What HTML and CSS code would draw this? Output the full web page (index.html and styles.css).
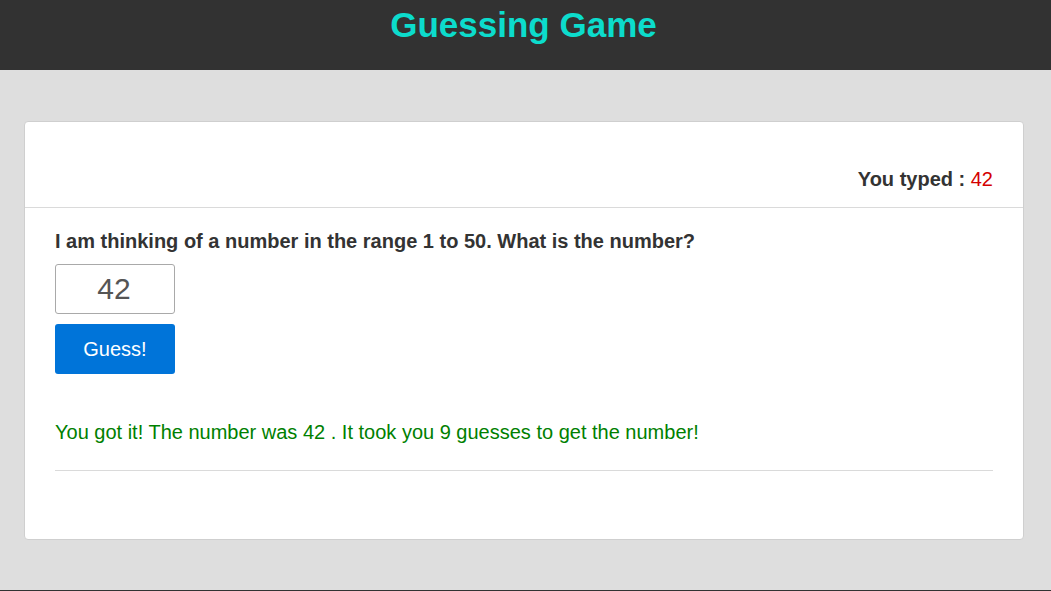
FILE: index.html
```html
<!DOCTYPE html>
<html>
<head>
<meta charset="utf-8">
<link rel="stylesheet" href="styles.css">
</head>
<body>
<header class="top">
  <h1 class="title">Guessing Game</h1>
</header>
<main class="card">
  <div class="card-head">
    <span class="typed-label">You typed : </span><span class="typed-val">42</span>
  </div>
  <div class="card-body">
    <h2 class="question">I am thinking of a number in the range 1 to 50. What is the number?</h2>
    <input class="guess-input" type="text" value="42" autofocus>
    <button class="guess-btn">Guess!</button>
    <p class="result">You got it! The number was 42 . It took you 9 guesses to get the number!</p>
    <hr class="rule">
  </div>
</main>
<footer class="foot"></footer>
</body>
</html>
```
FILE: styles.css
```css
html, body {
  margin: 0;
  padding: 0;
}
body {
  background: #dedede;
  font-family: "Liberation Sans", Arial, sans-serif;
  color: #333;
}
.top {
  background: #323232;
  height: 70px;
  display: flex;
  justify-content: center;
}
.title {
  margin: 5px 0 0 -4px;
  font-size: 35px;
  line-height: 40px;
  color: #0cdccc;
  font-weight: bold;
}
.card {
  width: 998px;
  margin: 51px 0 0 24px;
  background: #fff;
  border: 1px solid #cfcfcf;
  border-radius: 4px;
}
.card-head {
  height: 86px;
  border-bottom: 1px solid #dadada;
  display: flex;
  justify-content: flex-end;
  align-items: flex-end;
  padding: 0 30px 16px;
  box-sizing: border-box;
  font-size: 20px;
  line-height: 23px;
}
.typed-label {
  font-weight: bold;
  white-space: pre;
}
.typed-val {
  color: #d40000;
}
.card-body {
  padding: 22px 30px 68px;
  display: flex;
  flex-direction: column;
  align-items: flex-start;
}
.question {
  margin: 0 0 11px;
  font-size: 20px;
  line-height: 23px;
  font-weight: bold;
}
.guess-input {
  width: 120px;
  height: 50px;
  box-sizing: border-box;
  border: 1px solid #a9a9a9;
  border-radius: 3px;
  font-family: "Liberation Sans", Arial, sans-serif;
  font-size: 30px;
  color: #555;
  text-align: center;
  padding: 0 2px 0 0;
  outline: none;
}
.guess-btn {
  margin-top: 10px;
  width: 120px;
  height: 50px;
  border: none;
  border-radius: 3px;
  background: #0074d9;
  color: #fff;
  font-family: "Liberation Sans", Arial, sans-serif;
  font-size: 20px;
}
.result {
  margin: 47px 0 0;
  color: #008000;
  font-size: 20px;
  line-height: 23px;
}
.rule {
  align-self: stretch;
  margin: 26px 0 0;
  border: none;
  border-top: 1px solid #dadada;
  height: 0;
}
.foot {
  margin-top: 50px;
  height: 10px;
  background: #323232;
}
```
